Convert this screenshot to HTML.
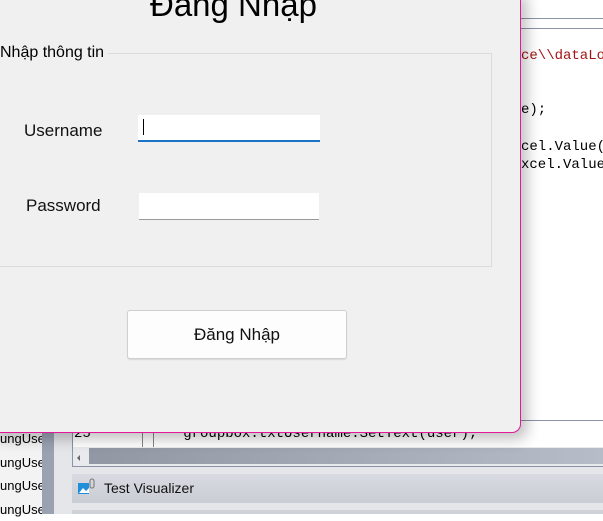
<!DOCTYPE html>
<html><head><meta charset="utf-8"><style>
*{margin:0;padding:0;box-sizing:border-box}
body{width:603px;height:514px;overflow:hidden;position:relative;background:#fff;font-family:"Liberation Sans",sans-serif}
.a{position:absolute}
.mono{font-family:"Liberation Mono",monospace;font-size:14px;white-space:pre}
</style></head><body>
<div class="a" style="left:0;top:0;width:603px;height:514px;background:linear-gradient(90deg,#f0f0f0 0,#fff 40px)"></div>
<div class="a" style="left:521px;top:18px;width:82px;height:1px;background:#8a94a6"></div>
<div class="a" style="left:521px;top:28px;width:82px;height:1px;background:#8a94a6"></div>
<div class="a mono" style="left:521px;top:48px;color:#a31515">ce\\dataLog</div>
<div class="a mono" style="left:521px;top:102px;color:#000">e);</div>
<div class="a mono" style="left:521px;top:139px;color:#000">cel.Value(<span style="color:#09f">0</span></div>
<div class="a mono" style="left:521px;top:157px;color:#000">xcel.Value(</div>
<div class="a" style="left:0;top:433px;width:42px;height:81px;background:#f3f3f3"></div>
<div class="a" style="left:0;top:427px;font-size:13px;line-height:23.5px;color:#000;width:42px;overflow:hidden;white-space:nowrap">ungUse<br>ungUse<br>ungUse<br>ungUse</div>
<div class="a" style="left:42px;top:433px;width:12px;height:81px;background:#9aa2b2"></div>
<div class="a" style="left:54px;top:433px;width:549px;height:81px;background:#e4e6ea"></div>
<div class="a" style="left:72px;top:420px;width:531px;height:47px;background:#fff;border:1px solid #8a94a6;border-right:none"></div>
<div class="a" style="left:142px;top:425px;width:1px;height:22px;background:#888"></div>
<div class="a" style="left:153px;top:425px;width:1px;height:22px;background:#888"></div>
<div class="a mono" style="left:74px;top:426px;color:#000">25           groupbox.txtUsername.SetText(user);</div>
<div class="a" style="left:73px;top:447px;width:530px;height:19px;background:#e8eaee"></div>
<div class="a" style="left:77px;top:455px;width:0;height:0;border:3px solid transparent;border-right-color:#666;border-left:none"></div>
<div class="a" style="left:89px;top:448px;width:514px;height:16px;background:linear-gradient(90deg,#9197a3,#b6bcc8)"></div>
<div class="a" style="left:72px;top:474px;width:531px;height:29px;background:linear-gradient(#d8dbe1,#c9cdd4)"></div>
<svg class="a" style="left:77px;top:478px" width="20" height="20"><rect x="1" y="5" width="11" height="11" fill="#1e8fd8"/><path d="M2 15 L6 10 L9 13 L12 10 V15Z" fill="#fff"/><rect x="13" y="1" width="4" height="9" rx="2" fill="none" stroke="#888" stroke-width="1.3"/></svg>
<div class="a" style="left:104px;top:480px;font-size:14px;color:#111">Test Visualizer</div>
<div class="a" style="left:72px;top:510px;width:531px;height:4px;background:#cfd2d8"></div>
<div class="a" style="left:-10px;top:-10px;width:531px;height:443px;background:#f0f0f0;border-right:1px solid #e0199a;border-bottom:1px solid #e0199a;border-bottom-right-radius:9px;box-shadow:6px 6px 14px rgba(0,0,0,.25)"></div>
<div class="a" style="left:150px;top:-14px;font-size:33px;color:#000">Đăng Nhập</div>
<div class="a" style="left:-5px;top:53px;width:497px;height:214px;border:1px solid #dcdcdc"></div>
<div class="a" style="left:0;top:44px;padding-right:4px;background:#f0f0f0;font-size:16px;color:#000">Nhập thông tin</div>
<div class="a" style="left:24px;top:121px;font-size:17px;color:#111">Username</div>
<div class="a" style="left:138px;top:115px;width:182px;height:27px;background:#fff;border-bottom:2px solid #1a73c8"></div>
<div class="a" style="left:143px;top:119px;width:1px;height:16px;background:#000"></div>
<div class="a" style="left:26px;top:196px;font-size:17px;color:#111">Password</div>
<div class="a" style="left:139px;top:193px;width:180px;height:27px;background:#fff;border-bottom:1px solid #999"></div>
<div class="a" style="left:127px;top:310px;width:220px;height:49px;background:#fdfdfd;border:1px solid #d0d0d0;border-radius:3px;box-shadow:0 1px 1px rgba(0,0,0,.1);font-size:17px;color:#111;text-align:center;line-height:47px">Đăng Nhập</div>
</body></html>
